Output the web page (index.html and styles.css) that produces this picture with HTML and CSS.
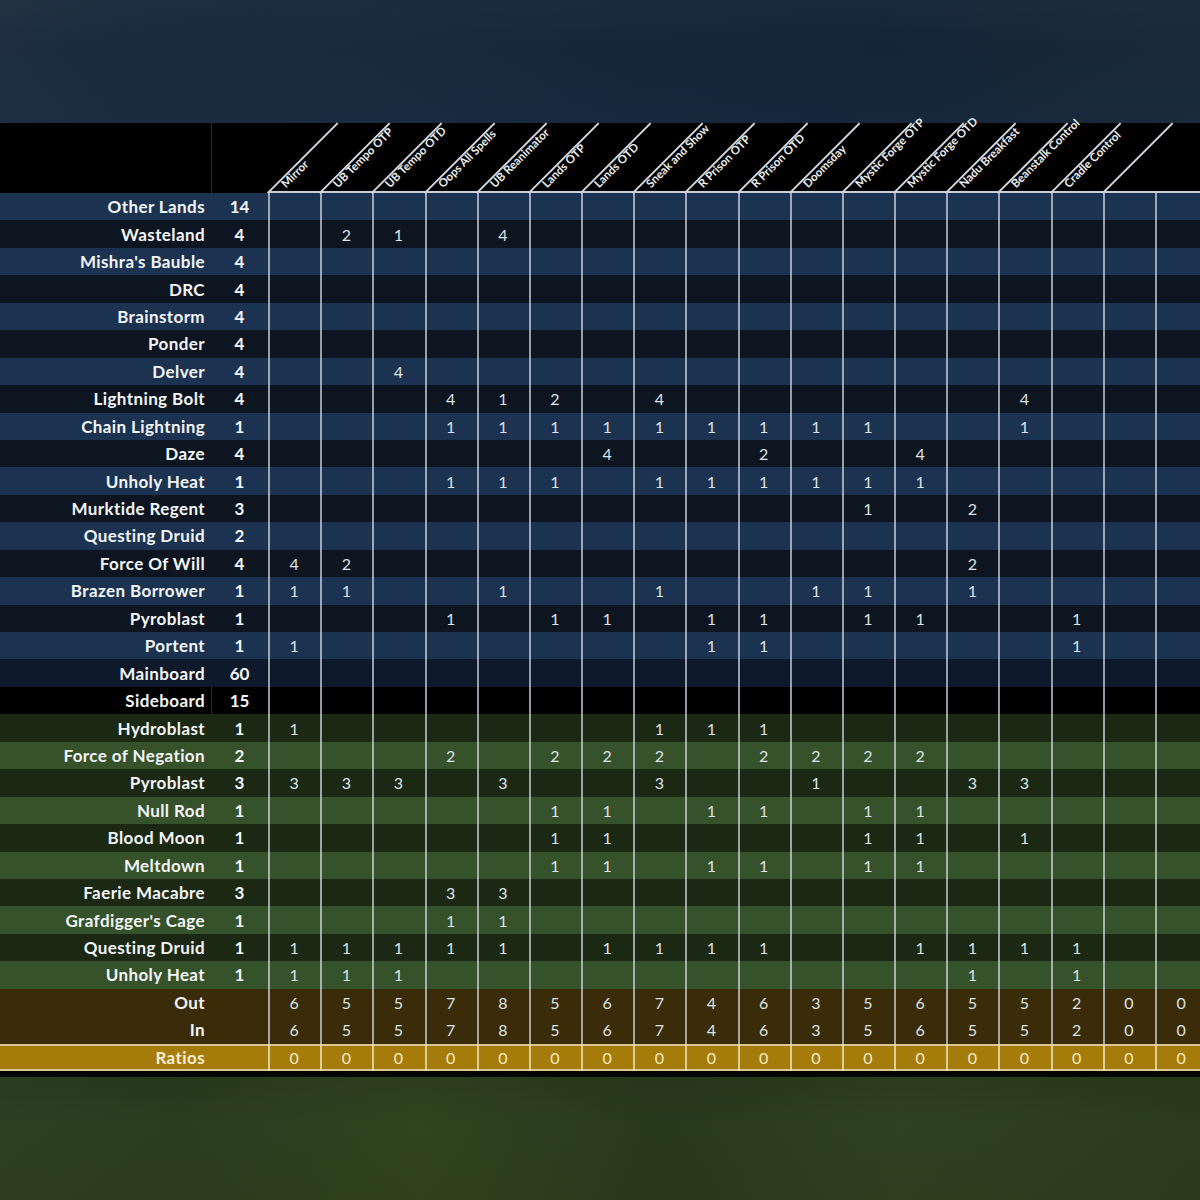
FILE: index.html
```html
<!DOCTYPE html>
<html lang="en">
<head>
<meta charset="utf-8">
<title>Sideboard Guide</title>
<link rel="stylesheet" href="styles.css">
</head>
<body>
<div class="sky"></div>
<div class="sheet">
<table class="grid">
<colgroup>
<col class="c-name"><col class="c-cnt">
<col class="c-d"><col class="c-d"><col class="c-d"><col class="c-d"><col class="c-d"><col class="c-d"><col class="c-d"><col class="c-d"><col class="c-d"><col class="c-d"><col class="c-d"><col class="c-d"><col class="c-d"><col class="c-d"><col class="c-d"><col class="c-d"><col class="c-d"><col class="c-d">
</colgroup>
<thead>
<tr class="hd">
<th class="name"></th><th class="cnt"></th>
<th class="dg"><span class="hl">Mirror</span></th>
<th class="dg"><span class="hl">UB Tempo OTP</span></th>
<th class="dg"><span class="hl">UB Tempo OTD</span></th>
<th class="dg"><span class="hl">Oops All Spells</span></th>
<th class="dg"><span class="hl">UB Reanimator</span></th>
<th class="dg"><span class="hl">Lands OTP</span></th>
<th class="dg"><span class="hl">Lands OTD</span></th>
<th class="dg"><span class="hl">Sneak and Show</span></th>
<th class="dg"><span class="hl">R Prison OTP</span></th>
<th class="dg"><span class="hl">R Prison OTD</span></th>
<th class="dg"><span class="hl">Doomsday</span></th>
<th class="dg"><span class="hl">Mystic Forge OTP</span></th>
<th class="dg"><span class="hl">Mystic Forge OTD</span></th>
<th class="dg"><span class="hl">Nadu Breakfast</span></th>
<th class="dg"><span class="hl">Beanstalk Control</span></th>
<th class="dg"><span class="hl">Cradle Control</span></th>
<th class="dg"></th>
<th class="hx"></th>
</tr>
</thead>
<tbody>
<tr class="bl"><th class="name">Other Lands</th><td class="cnt">14</td><td></td><td></td><td></td><td></td><td></td><td></td><td></td><td></td><td></td><td></td><td></td><td></td><td></td><td></td><td></td><td></td><td></td><td></td></tr>
<tr class="bd"><th class="name">Wasteland</th><td class="cnt">4</td><td></td><td>2</td><td>1</td><td></td><td>4</td><td></td><td></td><td></td><td></td><td></td><td></td><td></td><td></td><td></td><td></td><td></td><td></td><td></td></tr>
<tr class="bl"><th class="name">Mishra's Bauble</th><td class="cnt">4</td><td></td><td></td><td></td><td></td><td></td><td></td><td></td><td></td><td></td><td></td><td></td><td></td><td></td><td></td><td></td><td></td><td></td><td></td></tr>
<tr class="bd"><th class="name">DRC</th><td class="cnt">4</td><td></td><td></td><td></td><td></td><td></td><td></td><td></td><td></td><td></td><td></td><td></td><td></td><td></td><td></td><td></td><td></td><td></td><td></td></tr>
<tr class="bl"><th class="name">Brainstorm</th><td class="cnt">4</td><td></td><td></td><td></td><td></td><td></td><td></td><td></td><td></td><td></td><td></td><td></td><td></td><td></td><td></td><td></td><td></td><td></td><td></td></tr>
<tr class="bd"><th class="name">Ponder</th><td class="cnt">4</td><td></td><td></td><td></td><td></td><td></td><td></td><td></td><td></td><td></td><td></td><td></td><td></td><td></td><td></td><td></td><td></td><td></td><td></td></tr>
<tr class="bl"><th class="name">Delver</th><td class="cnt">4</td><td></td><td></td><td>4</td><td></td><td></td><td></td><td></td><td></td><td></td><td></td><td></td><td></td><td></td><td></td><td></td><td></td><td></td><td></td></tr>
<tr class="bd"><th class="name">Lightning Bolt</th><td class="cnt">4</td><td></td><td></td><td></td><td>4</td><td>1</td><td>2</td><td></td><td>4</td><td></td><td></td><td></td><td></td><td></td><td></td><td>4</td><td></td><td></td><td></td></tr>
<tr class="bl"><th class="name">Chain Lightning</th><td class="cnt">1</td><td></td><td></td><td></td><td>1</td><td>1</td><td>1</td><td>1</td><td>1</td><td>1</td><td>1</td><td>1</td><td>1</td><td></td><td></td><td>1</td><td></td><td></td><td></td></tr>
<tr class="bd"><th class="name">Daze</th><td class="cnt">4</td><td></td><td></td><td></td><td></td><td></td><td></td><td>4</td><td></td><td></td><td>2</td><td></td><td></td><td>4</td><td></td><td></td><td></td><td></td><td></td></tr>
<tr class="bl"><th class="name">Unholy Heat</th><td class="cnt">1</td><td></td><td></td><td></td><td>1</td><td>1</td><td>1</td><td></td><td>1</td><td>1</td><td>1</td><td>1</td><td>1</td><td>1</td><td></td><td></td><td></td><td></td><td></td></tr>
<tr class="bd"><th class="name">Murktide Regent</th><td class="cnt">3</td><td></td><td></td><td></td><td></td><td></td><td></td><td></td><td></td><td></td><td></td><td></td><td>1</td><td></td><td>2</td><td></td><td></td><td></td><td></td></tr>
<tr class="bl"><th class="name">Questing Druid</th><td class="cnt">2</td><td></td><td></td><td></td><td></td><td></td><td></td><td></td><td></td><td></td><td></td><td></td><td></td><td></td><td></td><td></td><td></td><td></td><td></td></tr>
<tr class="bd"><th class="name">Force Of Will</th><td class="cnt">4</td><td>4</td><td>2</td><td></td><td></td><td></td><td></td><td></td><td></td><td></td><td></td><td></td><td></td><td></td><td>2</td><td></td><td></td><td></td><td></td></tr>
<tr class="bl"><th class="name">Brazen Borrower</th><td class="cnt">1</td><td>1</td><td>1</td><td></td><td></td><td>1</td><td></td><td></td><td>1</td><td></td><td></td><td>1</td><td>1</td><td></td><td>1</td><td></td><td></td><td></td><td></td></tr>
<tr class="bd"><th class="name">Pyroblast</th><td class="cnt">1</td><td></td><td></td><td></td><td>1</td><td></td><td>1</td><td>1</td><td></td><td>1</td><td>1</td><td></td><td>1</td><td>1</td><td></td><td></td><td>1</td><td></td><td></td></tr>
<tr class="bl"><th class="name">Portent</th><td class="cnt">1</td><td>1</td><td></td><td></td><td></td><td></td><td></td><td></td><td></td><td>1</td><td>1</td><td></td><td></td><td></td><td></td><td></td><td>1</td><td></td><td></td></tr>
<tr class="mb"><th class="name">Mainboard</th><td class="cnt">60</td><td></td><td></td><td></td><td></td><td></td><td></td><td></td><td></td><td></td><td></td><td></td><td></td><td></td><td></td><td></td><td></td><td></td><td></td></tr>
<tr class="sb"><th class="name">Sideboard</th><td class="cnt">15</td><td></td><td></td><td></td><td></td><td></td><td></td><td></td><td></td><td></td><td></td><td></td><td></td><td></td><td></td><td></td><td></td><td></td><td></td></tr>
<tr class="gd"><th class="name">Hydroblast</th><td class="cnt">1</td><td>1</td><td></td><td></td><td></td><td></td><td></td><td></td><td>1</td><td>1</td><td>1</td><td></td><td></td><td></td><td></td><td></td><td></td><td></td><td></td></tr>
<tr class="gl"><th class="name">Force of Negation</th><td class="cnt">2</td><td></td><td></td><td></td><td>2</td><td></td><td>2</td><td>2</td><td>2</td><td></td><td>2</td><td>2</td><td>2</td><td>2</td><td></td><td></td><td></td><td></td><td></td></tr>
<tr class="gd"><th class="name">Pyroblast</th><td class="cnt">3</td><td>3</td><td>3</td><td>3</td><td></td><td>3</td><td></td><td></td><td>3</td><td></td><td></td><td>1</td><td></td><td></td><td>3</td><td>3</td><td></td><td></td><td></td></tr>
<tr class="gl"><th class="name">Null Rod</th><td class="cnt">1</td><td></td><td></td><td></td><td></td><td></td><td>1</td><td>1</td><td></td><td>1</td><td>1</td><td></td><td>1</td><td>1</td><td></td><td></td><td></td><td></td><td></td></tr>
<tr class="gd"><th class="name">Blood Moon</th><td class="cnt">1</td><td></td><td></td><td></td><td></td><td></td><td>1</td><td>1</td><td></td><td></td><td></td><td></td><td>1</td><td>1</td><td></td><td>1</td><td></td><td></td><td></td></tr>
<tr class="gl"><th class="name">Meltdown</th><td class="cnt">1</td><td></td><td></td><td></td><td></td><td></td><td>1</td><td>1</td><td></td><td>1</td><td>1</td><td></td><td>1</td><td>1</td><td></td><td></td><td></td><td></td><td></td></tr>
<tr class="gd"><th class="name">Faerie Macabre</th><td class="cnt">3</td><td></td><td></td><td></td><td>3</td><td>3</td><td></td><td></td><td></td><td></td><td></td><td></td><td></td><td></td><td></td><td></td><td></td><td></td><td></td></tr>
<tr class="gl"><th class="name">Grafdigger's Cage</th><td class="cnt">1</td><td></td><td></td><td></td><td>1</td><td>1</td><td></td><td></td><td></td><td></td><td></td><td></td><td></td><td></td><td></td><td></td><td></td><td></td><td></td></tr>
<tr class="gd"><th class="name">Questing Druid</th><td class="cnt">1</td><td>1</td><td>1</td><td>1</td><td>1</td><td>1</td><td></td><td>1</td><td>1</td><td>1</td><td>1</td><td></td><td></td><td>1</td><td>1</td><td>1</td><td>1</td><td></td><td></td></tr>
<tr class="gl"><th class="name">Unholy Heat</th><td class="cnt">1</td><td>1</td><td>1</td><td>1</td><td></td><td></td><td></td><td></td><td></td><td></td><td></td><td></td><td></td><td></td><td>1</td><td></td><td>1</td><td></td><td></td></tr>
<tr class="oi"><th class="name">Out</th><td class="cnt"></td><td>6</td><td>5</td><td>5</td><td>7</td><td>8</td><td>5</td><td>6</td><td>7</td><td>4</td><td>6</td><td>3</td><td>5</td><td>6</td><td>5</td><td>5</td><td>2</td><td>0</td><td>0</td></tr>
<tr class="oi"><th class="name">In</th><td class="cnt"></td><td>6</td><td>5</td><td>5</td><td>7</td><td>8</td><td>5</td><td>6</td><td>7</td><td>4</td><td>6</td><td>3</td><td>5</td><td>6</td><td>5</td><td>5</td><td>2</td><td>0</td><td>0</td></tr>
<tr class="ra"><th class="name">Ratios</th><td class="cnt"></td><td>0</td><td>0</td><td>0</td><td>0</td><td>0</td><td>0</td><td>0</td><td>0</td><td>0</td><td>0</td><td>0</td><td>0</td><td>0</td><td>0</td><td>0</td><td>0</td><td>0</td><td>0</td></tr>
</tbody>
</table>
</div>
<div class="gap"></div>
<div class="field"></div>
</body>
</html>
```
FILE: styles.css
```css
html, body {
  margin: 0;
  padding: 0;
}
body {
  width: 1200px;
  height: 1200px;
  overflow: hidden;
  background: #000;
  font-family: "Lato", "Open Sans", sans-serif;
  display: flex;
  flex-direction: column;
}
.sky {
  flex: none;
  height: 123px;
  background:
    linear-gradient(180deg, rgba(255,255,255,0.015) 0%, rgba(0,0,0,0) 40%, rgba(40,60,90,0.08) 100%),
    linear-gradient(90deg, #1e2e40 0%, #1b2b3e 12%, #182a3e 30%, #16273c 50%, #15253a 70%, #172738 85%, #192938 100%);
}
.sheet {
  flex: none;
  width: 1200px;
}
.grid {
  border-collapse: separate;
  border-spacing: 0;
  table-layout: fixed;
  width: 1207.24px;
}
.grid .c-name { width: 211px; }
.grid .c-cnt { width: 57px; }
.grid .c-d { width: 52.18px; }
.grid th,
.grid td {
  padding: 0;
  height: 27.45px;
  box-sizing: border-box;
}
.grid tbody tr {
  height: 27.45px;
}
.grid th.name {
  text-align: right;
  padding-right: 6px;
  font-weight: 700;
  font-size: 17px;
  letter-spacing: 0.4px;
  color: #f3f5f7;
  white-space: nowrap;
}
.grid td {
  text-align: center;
  font-size: 16px;
  font-weight: 400;
  color: #dde3e8;
  box-shadow: inset 2px 0 0 rgba(222, 230, 238, 0.66);
}
.grid td.cnt {
  font-weight: 700;
  font-size: 17px;
  color: #f3f5f7;
  box-shadow: none;
}

/* header */
.grid tr.hd {
  background: #000;
  height: 70px;
}
.grid tr.hd th {
  height: 70px;
  position: relative;
  vertical-align: bottom;
}
.grid tr.hd th.cnt {
  box-shadow: inset 1px 0 0 #2c2c2c;
}
.grid tr.hd th.dg,
.grid tr.hd th.hx {
  box-shadow: inset 0 -2px 0 #c6cfd8;
}
.grid th.dg::before {
  content: "";
  position: absolute;
  left: 0;
  bottom: 0;
  width: 99px;
  height: 1.5px;
  background: #d4d8dc;
  transform-origin: 0 100%;
  transform: rotate(-45deg);
}
.hl {
  position: absolute;
  left: 19px;
  bottom: 4px;
  font-size: 11.5px;
  font-weight: 700;
  line-height: 1;
  color: #eceeef;
  white-space: nowrap;
  transform-origin: 0 100%;
  transform: rotate(-45deg);
}

/* row colours */
.grid tr.bl { background: #1b3350; }
.grid tr.bd { background: #0d1620; }
.grid tr.mb { background: #0e1a2b; }
.grid tr.sb { background: #000; }
.grid tr.sb td.cnt { box-shadow: inset 1px 0 0 #2c2c2c; }
.grid tr.gd { background: #1b2814; }
.grid tr.gl { background: #36522a; }
.grid tr.oi { background: #3a2b09; }
.grid tr.ra { background: #a57c0a; }
.grid tr.ra th,
.grid tr.ra td.cnt {
  box-shadow: inset 0 2px 0 #d9c78c, inset 0 -2px 0 #d9c78c;
}
.grid tr.ra td {
  color: #f6ebc4;
  box-shadow: inset 2px 0 0 rgba(236, 226, 190, 0.8), inset 0 2px 0 #d9c78c, inset 0 -2px 0 #d9c78c;
}
.grid tr.ra th.name { color: #f6efd6; }

.gap {
  flex: none;
  height: 6px;
  background: #050505;
}
.field {
  flex: 1;
  background:
    linear-gradient(180deg, rgba(0,0,0,0.08) 0%, rgba(0,0,0,0) 40%, rgba(40,50,10,0.12) 100%),
    linear-gradient(90deg, #2d4022 0%, #2a3d1e 15%, #30441f 35%, #283a1c 55%, #2e4120 75%, #2a3c1d 100%);
}
```
